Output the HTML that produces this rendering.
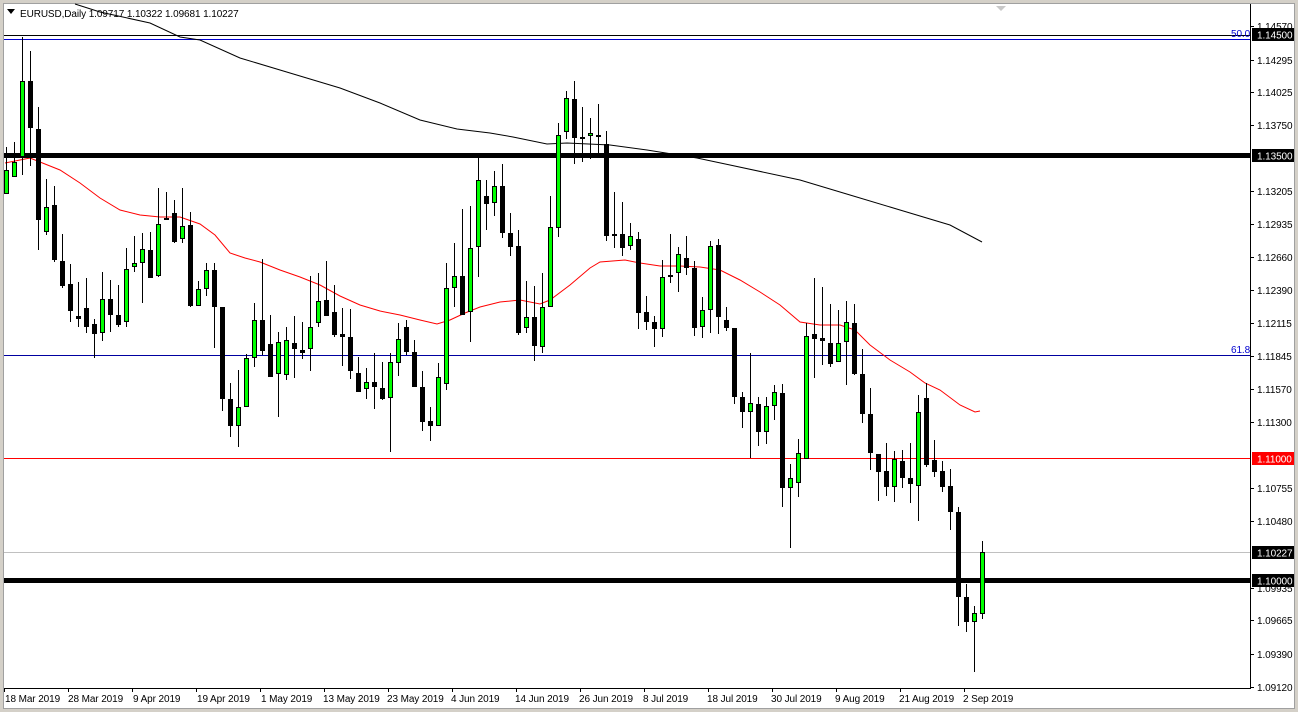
<!DOCTYPE html>
<html><head><meta charset="utf-8"><style>
html,body{margin:0;padding:0;background:#fff;}
svg{display:block;}
text{font-family:"Liberation Sans",sans-serif;font-size:10px;letter-spacing:-0.1px;}
</style></head><body>
<svg width="1298" height="712" viewBox="0 0 1298 712" xmlns="http://www.w3.org/2000/svg">
<rect x="0" y="0" width="1298" height="712" fill="#fff"/>
<rect x="0" y="0" width="1298" height="712" fill="none" stroke="#d4d0c8" stroke-width="6"/>
<rect x="3.5" y="3.5" width="1291" height="705" fill="none" stroke="#a0a0a0" stroke-width="1"/>
<line x1="1250.5" y1="4" x2="1250.5" y2="688" stroke="#000"/>
<line x1="4" y1="688.5" x2="1251" y2="688.5" stroke="#000"/>
<path d="M7 9h8l-4 5z" fill="#000"/>
<text x="20" y="17" fill="#000">EURUSD,Daily  1.09717 1.10322 1.09681 1.10227</text>
<path d="M996 6h10l-5 5z" fill="#c8c8c8"/>
<line x1="4" y1="35.5" x2="1250" y2="35.5" stroke="#000"/>
<line x1="4" y1="39.5" x2="1250" y2="39.5" stroke="#0000d0"/>
<text x="1231" y="37" fill="#0000d0">50.0</text>
<line x1="4" y1="355.5" x2="1250" y2="355.5" stroke="#0000a0"/>
<text x="1231" y="353" fill="#0000d0">61.8</text>
<line x1="4" y1="458.5" x2="1250" y2="458.5" stroke="#ff0000"/>
<line x1="4" y1="552.5" x2="1250" y2="552.5" stroke="#c0c0c0"/>
<polyline fill="none" stroke="#000" stroke-width="1" points="75,4 100,12 150,23 180,37 200,40 240,58 290,73 340,88 380,103 420,120 457,129 490,133 513,137 547,144 567,143 610,145 647,150 697,158 730,165 800,180 850,195 900,210 950,225 982,242"/>
<polyline fill="none" stroke="#ff0000" stroke-width="1" points="5,163 20,160 30,158 40,162 60,170 80,183 100,198 120,210 140,215 160,217 180,217 200,224 215,235 230,253 245,258 260,262 280,270 300,277 320,285 340,296 360,305 380,311 400,315 420,320 437,324 450,320 465,313 480,307 500,302 520,300 540,304 550,300 570,285 590,268 600,262 625,260 640,263 660,266 680,266 700,267 720,270 740,280 760,292 780,305 800,322 820,325 840,325 855,330 870,345 890,360 910,372 925,383 940,390 960,405 975,412 980,411"/>
<rect x="4" y="153" width="1246" height="5" fill="#000"/>
<rect x="4" y="578" width="1246" height="5" fill="#000"/>
<path stroke="#000" stroke-width="1" fill="none" d="
M6.5 147V194M14.5 142V177M22.5 37V175M30.5 51V166M38.5 107V250M46.5 179V235M54.5 186V262M62.5 234V288M70.5 264V322M78.5 282V327M86.5 278V333M94.5 319V358M102.5 272V341M110.5 280V332M118.5 285V327M126.5 248V327M134.5 236V272M142.5 233V303M150.5 232V278M158.5 188V277M166.5 192V220M174.5 200V243M182.5 188V243M190.5 212V307M198.5 281V306M206.5 263V296M214.5 263V348M222.5 307V411M230.5 383V437M238.5 370V447M246.5 354V407M254.5 303V367M262.5 259V355M270.5 315V377M278.5 332V417M286.5 327V380M294.5 316V378M302.5 322V359M310.5 276V371M318.5 273V327M326.5 261V316M334.5 285V337M342.5 308V366M350.5 309V379M358.5 357V392M366.5 368V399M374.5 353V409M382.5 362V400M390.5 353V452M398.5 323V376M406.5 320V355M414.5 340V387M422.5 371V431M430.5 407V441M438.5 363V426M446.5 263V390M454.5 243V307M462.5 209V315M470.5 206V342M478.5 158V277M486.5 180V230M494.5 171V216M502.5 164V238M510.5 213V256M518.5 230V335M526.5 281V333M534.5 286V361M542.5 273V353M550.5 196V307M558.5 123V237M566.5 91V139M574.5 81V164M582.5 107V162M590.5 118V159M598.5 104V154M606.5 131V241M614.5 192V248M622.5 202V256M630.5 223V250M638.5 232V329M646.5 296V330M654.5 316V347M662.5 260V337M670.5 234V283M678.5 247V292M686.5 236V275M694.5 261V336M702.5 297V338M710.5 241V333M718.5 239V334M726.5 307V331M734.5 328V404M742.5 392V428M750.5 353V458M758.5 397V446M766.5 397V444M774.5 385V420M782.5 384V507M790.5 464V548M798.5 439V497M806.5 323V459M814.5 278V378M822.5 287V365M830.5 304V367M838.5 310V362M846.5 301V385M854.5 304V375M862.5 349V423M870.5 388V470M878.5 454V501M886.5 443V496M894.5 451V502M902.5 450V488M910.5 443V503M918.5 395V521M926.5 383V467M934.5 440V477M942.5 461V492M950.5 469V530M958.5 507V626M966.5 584V632M974.5 606V672M982.5 541V619"/>
<g fill="#000">
<rect x="28" y="81" width="5" height="47"/><rect x="36" y="129" width="5" height="91"/><rect x="52" y="205" width="5" height="55"/><rect x="60" y="261" width="5" height="25"/><rect x="68" y="284" width="5" height="27"/><rect x="76" y="316" width="5" height="3"/><rect x="84" y="308" width="5" height="19"/><rect x="92" y="324" width="5" height="10"/><rect x="108" y="299" width="5" height="16"/><rect x="116" y="315" width="5" height="10"/><rect x="148" y="250" width="5" height="28"/><rect x="164" y="218" width="5" height="2"/><rect x="172" y="213" width="5" height="29"/><rect x="188" y="225" width="5" height="81"/><rect x="212" y="270" width="5" height="37"/><rect x="220" y="307" width="5" height="92"/><rect x="228" y="399" width="5" height="27"/><rect x="260" y="320" width="5" height="31"/><rect x="268" y="344" width="5" height="33"/><rect x="292" y="343" width="5" height="6"/><rect x="300" y="350" width="5" height="3"/><rect x="324" y="300" width="5" height="16"/><rect x="332" y="312" width="5" height="23"/><rect x="340" y="334" width="5" height="3"/><rect x="348" y="337" width="5" height="34"/><rect x="356" y="373" width="5" height="19"/><rect x="372" y="382" width="5" height="5"/><rect x="380" y="388" width="5" height="11"/><rect x="404" y="327" width="5" height="25"/><rect x="412" y="352" width="5" height="35"/><rect x="420" y="387" width="5" height="35"/><rect x="428" y="421" width="5" height="5"/><rect x="460" y="276" width="5" height="39"/><rect x="484" y="196" width="5" height="8"/><rect x="500" y="186" width="5" height="47"/><rect x="508" y="233" width="5" height="14"/><rect x="516" y="246" width="5" height="87"/><rect x="532" y="317" width="5" height="29"/><rect x="572" y="99" width="5" height="39"/><rect x="580" y="137" width="5" height="2"/><rect x="596" y="135" width="5" height="2"/><rect x="604" y="144" width="5" height="92"/><rect x="612" y="234" width="5" height="2"/><rect x="620" y="234" width="5" height="14"/><rect x="636" y="239" width="5" height="74"/><rect x="644" y="312" width="5" height="10"/><rect x="652" y="322" width="5" height="7"/><rect x="684" y="258" width="5" height="10"/><rect x="692" y="268" width="5" height="60"/><rect x="716" y="245" width="5" height="72"/><rect x="724" y="320" width="5" height="8"/><rect x="732" y="328" width="5" height="69"/><rect x="740" y="397" width="5" height="15"/><rect x="756" y="404" width="5" height="28"/><rect x="780" y="393" width="5" height="95"/><rect x="812" y="334" width="5" height="5"/><rect x="820" y="338" width="5" height="3"/><rect x="828" y="343" width="5" height="21"/><rect x="852" y="323" width="5" height="51"/><rect x="860" y="374" width="5" height="40"/><rect x="868" y="414" width="5" height="39"/><rect x="876" y="454" width="5" height="18"/><rect x="884" y="471" width="5" height="16"/><rect x="900" y="461" width="5" height="17"/><rect x="908" y="478" width="5" height="6"/><rect x="924" y="398" width="5" height="67"/><rect x="932" y="460" width="5" height="12"/><rect x="940" y="471" width="5" height="16"/><rect x="948" y="486" width="5" height="26"/><rect x="956" y="512" width="5" height="85"/><rect x="964" y="597" width="5" height="25"/>
</g>
<g fill="#00ff00" stroke="#000" stroke-width="1">
<rect x="4.5" y="170.5" width="4" height="23"/><rect x="12.5" y="162.5" width="4" height="14"/><rect x="20.5" y="81.5" width="4" height="75"/><rect x="44.5" y="207.5" width="4" height="24"/><rect x="100.5" y="299.5" width="4" height="33"/><rect x="124.5" y="269.5" width="4" height="52"/><rect x="132.5" y="263.5" width="4" height="3"/><rect x="140.5" y="249.5" width="4" height="13"/><rect x="156.5" y="224.5" width="4" height="51"/><rect x="180.5" y="226.5" width="4" height="12"/><rect x="196.5" y="289.5" width="4" height="16"/><rect x="204.5" y="270.5" width="4" height="18"/><rect x="236.5" y="407.5" width="4" height="18"/><rect x="244.5" y="358.5" width="4" height="48"/><rect x="252.5" y="320.5" width="4" height="37"/><rect x="276.5" y="342.5" width="4" height="31"/><rect x="284.5" y="340.5" width="4" height="34"/><rect x="308.5" y="327.5" width="4" height="21"/><rect x="316.5" y="301.5" width="4" height="21"/><rect x="364.5" y="382.5" width="4" height="6"/><rect x="388.5" y="362.5" width="4" height="35"/><rect x="396.5" y="339.5" width="4" height="23"/><rect x="436.5" y="377.5" width="4" height="48"/><rect x="444.5" y="288.5" width="4" height="95"/><rect x="452.5" y="276.5" width="4" height="11"/><rect x="468.5" y="248.5" width="4" height="63"/><rect x="476.5" y="180.5" width="4" height="66"/><rect x="492.5" y="186.5" width="4" height="16"/><rect x="524.5" y="317.5" width="4" height="10"/><rect x="540.5" y="307.5" width="4" height="39"/><rect x="548.5" y="227.5" width="4" height="79"/><rect x="556.5" y="135.5" width="4" height="92"/><rect x="564.5" y="98.5" width="4" height="33"/><rect x="588.5" y="133.5" width="4" height="2"/><rect x="628.5" y="236.5" width="4" height="9"/><rect x="660.5" y="277.5" width="4" height="51"/><rect x="668.5" y="275.5" width="4" height="1"/><rect x="676.5" y="254.5" width="4" height="18"/><rect x="700.5" y="310.5" width="4" height="16"/><rect x="708.5" y="246.5" width="4" height="63"/><rect x="748.5" y="403.5" width="4" height="8"/><rect x="764.5" y="406.5" width="4" height="25"/><rect x="772.5" y="392.5" width="4" height="13"/><rect x="788.5" y="478.5" width="4" height="9"/><rect x="796.5" y="453.5" width="4" height="29"/><rect x="804.5" y="336.5" width="4" height="122"/><rect x="836.5" y="343.5" width="4" height="18"/><rect x="844.5" y="322.5" width="4" height="19"/><rect x="892.5" y="459.5" width="4" height="27"/><rect x="916.5" y="412.5" width="4" height="73"/><rect x="972.5" y="613.5" width="4" height="8"/><rect x="980.5" y="552.5" width="4" height="61"/>
</g>
<path stroke="#000" d="M1250 26.5h4M1250 60.5h4M1250 92.5h4M1250 125.5h4M1250 191.5h4M1250 224.5h4M1250 257.5h4M1250 290.5h4M1250 323.5h4M1250 356.5h4M1250 389.5h4M1250 422.5h4M1250 488.5h4M1250 521.5h4M1250 588.5h4M1250 620.5h4M1250 654.5h4M1250 687.5h4"/>
<g fill="#000">
<text x="1257" y="30">1.14570</text>
<text x="1257" y="64">1.14295</text>
<text x="1257" y="96">1.14025</text>
<text x="1257" y="129">1.13750</text>
<text x="1257" y="195">1.13205</text>
<text x="1257" y="228">1.12935</text>
<text x="1257" y="261">1.12660</text>
<text x="1257" y="294">1.12390</text>
<text x="1257" y="327">1.12115</text>
<text x="1257" y="360">1.11845</text>
<text x="1257" y="393">1.11570</text>
<text x="1257" y="426">1.11300</text>
<text x="1257" y="492">1.10755</text>
<text x="1257" y="525">1.10480</text>
<text x="1257" y="592">1.09935</text>
<text x="1257" y="624">1.09665</text>
<text x="1257" y="658">1.09390</text>
<text x="1257" y="691">1.09120</text>
</g>
<rect x="1252" y="28" width="42" height="13" fill="#000"/><text x="1257" y="38.5" fill="#fff">1.14500</text>
<rect x="1252" y="149" width="42" height="13" fill="#000"/><text x="1257" y="159.5" fill="#fff">1.13500</text>
<rect x="1252" y="452" width="42" height="13" fill="#ff0000"/><text x="1257" y="462.5" fill="#fff">1.11000</text>
<rect x="1252" y="546" width="42" height="13" fill="#000"/><text x="1257" y="556.5" fill="#fff">1.10227</text>
<rect x="1252" y="574" width="42" height="13" fill="#000"/><text x="1257" y="584.5" fill="#fff">1.10000</text>
<path stroke="#000" d="M4.5 688v4M68.5 688v4M132.5 688v4M196.5 688v4M260.5 688v4M324.5 688v4M388.5 688v4M452.5 688v4M516.5 688v4M580.5 688v4M644.5 688v4M708.5 688v4M772.5 688v4M836.5 688v4M900.5 688v4M964.5 688v4"/>
<g fill="#000">
<text x="5" y="702">18 Mar 2019</text>
<text x="68" y="702">28 Mar 2019</text>
<text x="133" y="702">9 Apr 2019</text>
<text x="197" y="702">19 Apr 2019</text>
<text x="261" y="702">1 May 2019</text>
<text x="323" y="702">13 May 2019</text>
<text x="387" y="702">23 May 2019</text>
<text x="451" y="702">4 Jun 2019</text>
<text x="515" y="702">14 Jun 2019</text>
<text x="579" y="702">26 Jun 2019</text>
<text x="643" y="702">8 Jul 2019</text>
<text x="707" y="702">18 Jul 2019</text>
<text x="771" y="702">30 Jul 2019</text>
<text x="835" y="702">9 Aug 2019</text>
<text x="899" y="702">21 Aug 2019</text>
<text x="963" y="702">2 Sep 2019</text>
</g>
</svg>
</body></html>
